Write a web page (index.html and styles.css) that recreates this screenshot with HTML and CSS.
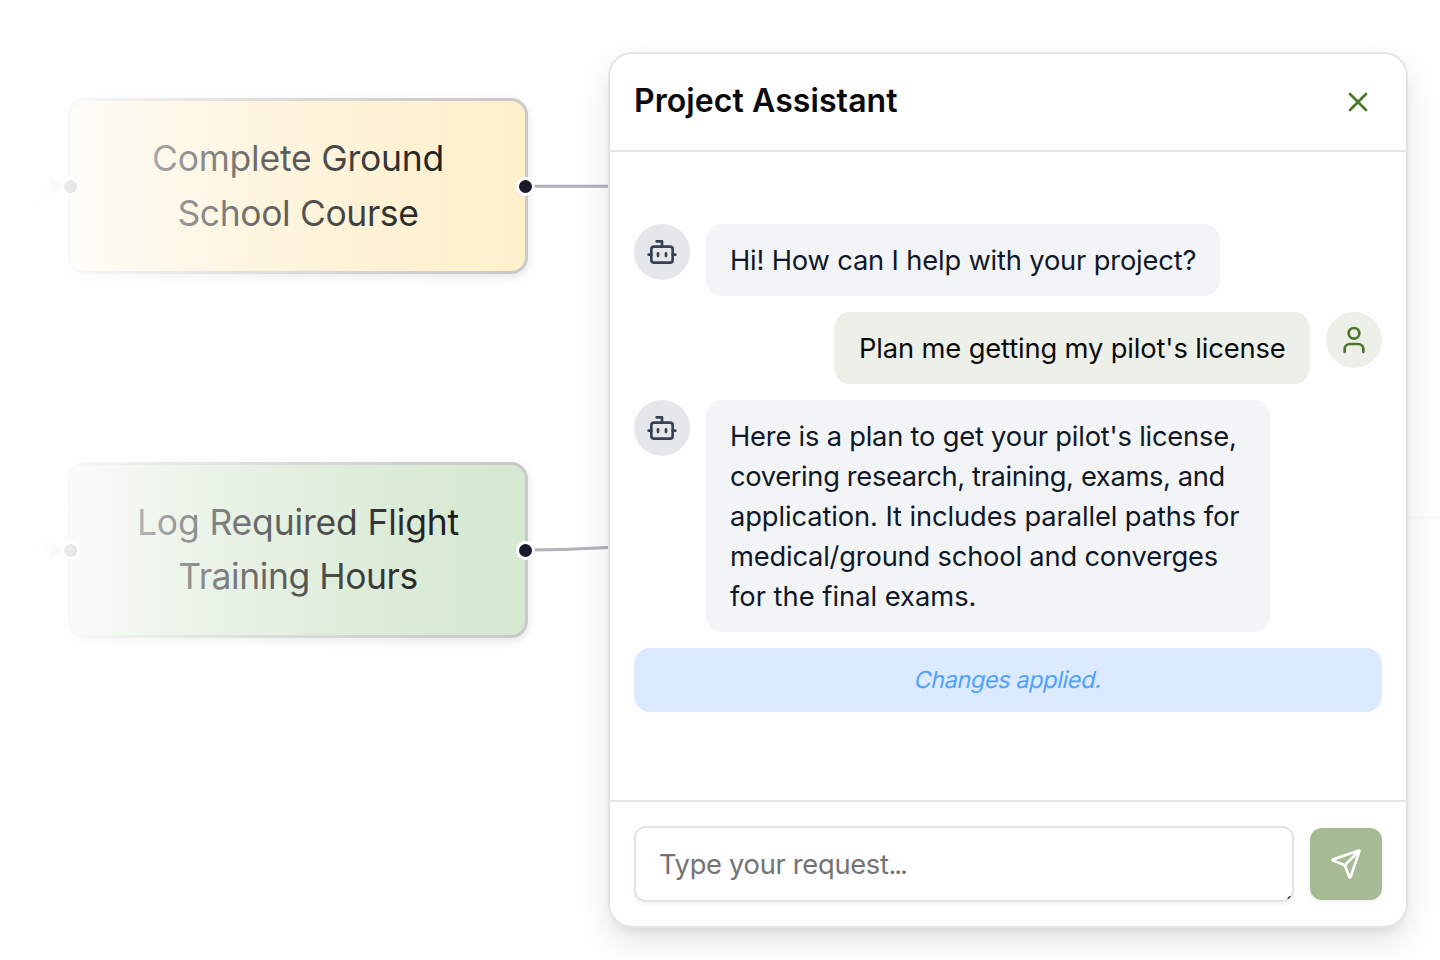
FILE: index.html
```html
<!DOCTYPE html>
<html lang="en">
<head>
<meta charset="utf-8">
<title>Project Assistant</title>
<link rel="stylesheet" href="styles.css">
</head>
<body>
<main class="stage">
  <section class="canvas">
    <svg class="edges" width="608" height="960" viewBox="0 0 608 960">
      <path d="M528 186.300H608M528 550C560 550 580 549 608 547.500M30 187C42 187 48 186 56 186M34 211C38 200 44 191 56 187M30 550H56M32 522C36 534 44 545 56 549"/>
      <path class="arrow" d="M51 177L63 186.500L51 195ZM51 541L63 550.500L51 559Z"/>
    </svg>
    <article class="node node-yellow">
      <p><span class="n1">Complete Ground</span><br><span class="n2">School Course</span></p>
      <i class="handle left"></i><i class="handle right"></i>
    </article>
    <article class="node node-green">
      <p><span class="n3">Log Required Flight</span><br><span class="n4">Training Hours</span></p>
      <i class="handle left"></i><i class="handle right"></i>
    </article>
    <div class="fade"></div>
  </section>
  <div class="far-edge"></div>
  <section class="panel">
    <header class="head">
      <h1 class="title">Project Assistant</h1>
      <svg class="icon close" viewBox="0 0 24 24"><path d="M18 6 6 18M6 6l12 12"/></svg>
    </header>
    <div class="messages">
      <div class="row">
        <div class="avatar"><svg class="icon" viewBox="0 0 24 24"><path d="M12 8V4H8"/><rect x="4" y="8" width="16" height="12" rx="2"/><path d="M2 14h2M20 14h2M15 13v2M9 13v2"/></svg></div>
        <div class="bubble w1"><span class="t1">Hi! How can I help with your project?</span></div>
      </div>
      <div class="row mine">
        <div class="bubble w2"><span class="t2">Plan me getting my pilot's license</span></div>
        <div class="avatar user"><svg class="icon" viewBox="0 0 24 24"><path d="M19 21v-2a4 4 0 0 0-4-4H9a4 4 0 0 0-4 4v2"/><circle cx="12" cy="7" r="4"/></svg></div>
      </div>
      <div class="row">
        <div class="avatar"><svg class="icon" viewBox="0 0 24 24"><path d="M12 8V4H8"/><rect x="4" y="8" width="16" height="12" rx="2"/><path d="M2 14h2M20 14h2M15 13v2M9 13v2"/></svg></div>
        <div class="bubble w3"><span class="t3">Here is a plan to get your pilot's license,</span><br><span class="t4">covering research, training, exams, and</span><br><span class="t5">application. It includes parallel paths for</span><br><span class="t6">medical/ground school and converges</span><br><span class="t7">for the final exams.</span></div>
      </div>
      <div class="notice"><span class="t8">Changes applied.</span></div>
    </div>
    <footer class="foot">
      <div class="field"><span class="t9">Type your request<span class="dots">...</span></span><i class="grip"></i></div>
      <button class="send" aria-label="Send"><svg class="icon" viewBox="0 0 24 24"><path d="M14.536 21.686a.5.5 0 0 0 .937-.024l6.5-19a.496.496 0 0 0-.635-.635l-19 6.5a.5.5 0 0 0-.024.937l7.93 3.18a2 2 0 0 1 1.112 1.11z"/><path d="m21.854 2.147-10.94 10.939"/></svg></button>
    </footer>
  </section>
</main>
</body>
</html>
```
FILE: styles.css
```css
* { box-sizing: border-box; }
body { margin: 0; background: #fefefe; font-family: Inter, "Liberation Sans", sans-serif; color: #0a0a0a; }
.stage { position: relative; width: 1440px; height: 960px; overflow: hidden; display: flex; }
.canvas { position: relative; width: 608px; height: 960px; }
.edges { position: absolute; inset: 0; fill: none; stroke: #b1b1b7; stroke-width: 3; }
.edges .arrow { fill: #b1b1b7; stroke: none; }
.node { position: absolute; left: 68px; width: 460px; height: 176px; border: 3px solid #cbcacb; border-radius: 17px; display: flex; align-items: center; justify-content: center; text-align: center; font-size: 35.5px; line-height: 54px; color: #101010; box-shadow: 0 3px 8px rgba(0,0,0,.1); }
.node p { margin: 0; white-space: nowrap; }
.node-yellow { top: 98px; background: #fff0cd; line-height: 55px; }
.node-green { top: 462px; background: #d7e9d2; }
.n1 { letter-spacing: -.23px; }
.n2 { letter-spacing: -.4px; }
.n3 { letter-spacing: -.16px; }
.n4 { letter-spacing: -.45px; }
.handle { position: absolute; top: 76px; width: 19px; height: 19px; border: 3px solid #fefefe; border-radius: 50%; background: #1a192b; }
.handle.left { left: -10px; }
.handle.right { right: -10px; }
.fade { position: absolute; inset: 0; background: linear-gradient(90deg, #fefefe 36px, rgba(254,254,254,.9) 70px, rgba(254,254,254,.62) 160px, rgba(254,254,254,.35) 270px, rgba(254,254,254,.09) 420px, rgba(254,254,254,0) 510px); }
.far-edge { position: absolute; left: 1408px; top: 516px; width: 32px; height: 4px; background: #fafafb; }
.panel { position: relative; margin-top: 52px; width: 800px; height: 876px; border: 2px solid #e4e4e4; border-radius: 24px; background: #fefefe; display: flex; flex-direction: column; box-shadow: 0 14px 32px -2px rgba(0,0,0,.1), 0 8px 12px -6px rgba(0,0,0,.1); }
.head { height: 98px; flex: none; display: flex; align-items: center; justify-content: space-between; padding: 0 32px 2px 24px; border-bottom: 2px solid #e4e4e4; }
.title { margin: 0; font-size: 32px; line-height: 40px; font-weight: 600; letter-spacing: .08px; white-space: nowrap; }
.icon { display: block; width: 32px; height: 32px; fill: none; stroke: currentColor; stroke-width: 2; stroke-linecap: round; stroke-linejoin: round; }
.close { color: #4a7729; margin-top: 2px; }
.messages { flex: 1; padding: 72px 24px 0; display: flex; flex-direction: column; gap: 16px; }
.row { display: flex; gap: 16px; align-items: flex-start; }
.mine { justify-content: flex-end; }
.avatar { width: 56px; height: 56px; border-radius: 50%; background: #e5e7eb; color: #364153; display: flex; align-items: center; justify-content: center; }
.avatar.user, .mine .bubble { background: #edf0e9; }
.avatar.user { color: #4a7729; }
.bubble { padding: 17px 24px 15px; border-radius: 16px; background: #f3f4f6; color: #101828; font-size: 27.3px; line-height: 40px; white-space: nowrap; }
.mine .bubble { color: #0a0a0a; padding-left: 25px; }
.w1 { width: 514px; }
.w2 { width: 476px; }
.w3 { width: 564px; }
.t1 { letter-spacing: -.17px; }
.t2 { letter-spacing: -.13px; }
.t3 { letter-spacing: -.21px; }
.t4 { letter-spacing: -.35px; }
.t5 { letter-spacing: -.1px; }
.t6 { letter-spacing: -.19px; }
.t8 { letter-spacing: -.4px; transform: skewX(-12deg); }
.t9 { letter-spacing: -.3px; }
.dots { letter-spacing: -2.1px; }
.notice { height: 64px; padding: 0 0 2px 2px; border-radius: 16px; background: #dbeafe; color: #51a2ff; display: flex; align-items: center; justify-content: center; font-size: 23.5px; }
.foot { height: 126px; flex: none; border-top: 2px solid #e4e4e4; padding: 24px; display: flex; gap: 16px; align-items: center; }
.field { position: relative; width: 660px; height: 76px; border: 2px solid #e4e4e4; border-radius: 12px; padding: 17px 23px 15px; color: #737373; font-size: 27.3px; line-height: 40px; white-space: nowrap; box-shadow: 0 2px 4px rgba(0,0,0,.05); }
.grip { position: absolute; right: 2px; bottom: 1px; width: 2px; height: 3px; background: #555; transform: skewX(-35deg); }
.send { width: 72px; height: 72px; border: 0; border-radius: 12px; background: #a6ba95; color: #fff; padding: 0; display: flex; align-items: center; justify-content: center; box-shadow: 0 2px 4px rgba(0,0,0,.05); }
```
